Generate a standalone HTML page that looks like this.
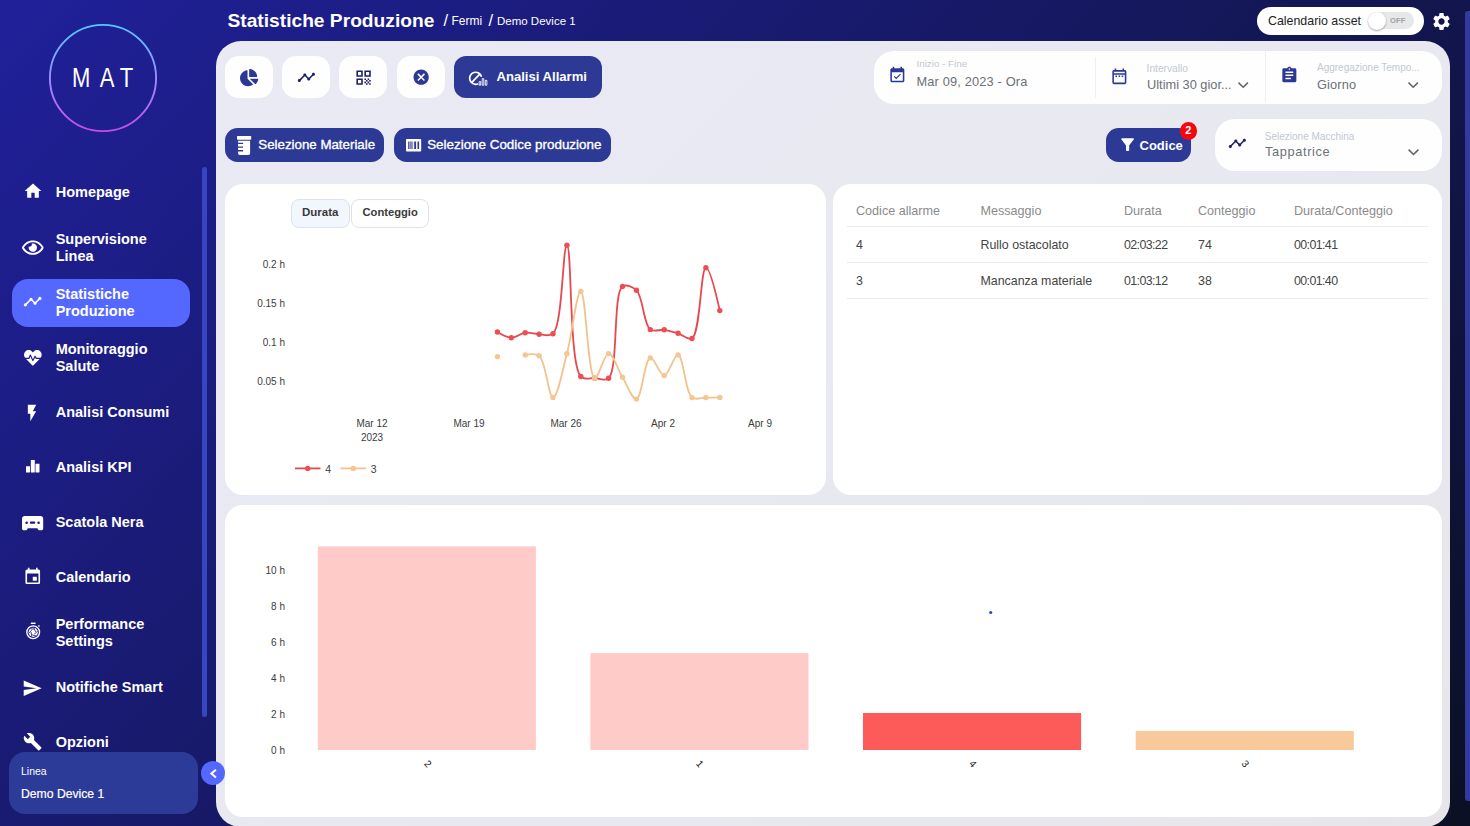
<!DOCTYPE html>
<html lang="it">
<head>
<meta charset="utf-8">
<title>Statistiche Produzione</title>
<style>
*{box-sizing:border-box;margin:0;padding:0}
html,body{width:1470px;height:826px;overflow:hidden}
body{font-family:"Liberation Sans",sans-serif;position:relative;background:linear-gradient(133deg,#20209a 0%,#0b1024 100%);color:#fff}
.abs{position:absolute}
.t{position:absolute;white-space:nowrap;line-height:1}
svg{display:block;position:absolute;overflow:visible}
/* sidebar */
.nav{position:absolute;left:55.7px;font-weight:bold;font-size:14.5px;line-height:17px;color:#fff;white-space:nowrap}
.active{position:absolute;left:12px;top:278.5px;width:178px;height:48px;border-radius:16px;background:#5468ff}
.sbar{position:absolute;left:202px;top:167px;width:5px;height:550px;border-radius:2.5px;background:#3645c0}
.line{position:absolute;left:9px;top:752.4px;width:188.5px;height:61.5px;border-radius:16px;background:#2c3a98}
.collapse{position:absolute;left:200.7px;top:760.7px;width:24px;height:24px;border-radius:12px;background:#5468ff}
/* main */
.main{position:absolute;left:216px;top:41px;width:1234px;height:786px;border-radius:25px;background:linear-gradient(135deg,#eaeaf5 0%,#e8e8f0 60%,#e6e6ea 100%)}
.vscroll{position:absolute;left:1465.400px;top:10.500px;width:8px;height:790.500px;border-radius:3px;background:#2f3b9e}
.wbtn{position:absolute;top:56px;width:48px;height:42px;border-radius:14px;background:#fefefe}
.bbtn{position:absolute;background:#2c3a95;color:#fff;border-radius:12.5px}
.card{position:absolute;background:#fff;border-radius:18px}
.lbl{position:absolute;white-space:nowrap;line-height:1;font-size:9.5px;color:#c3c8d3}
.val{position:absolute;white-space:nowrap;line-height:1;font-size:13.2px;color:#6c7077}
.th{position:absolute;white-space:nowrap;line-height:1;font-size:12.6px;color:#8b8b8b;top:205px}
.td{position:absolute;white-space:nowrap;line-height:1;font-size:12.4px;color:#444}
.hr{position:absolute;left:847px;width:581px;height:1px;background:#e9ebf2}
.ax{position:absolute;white-space:nowrap;line-height:1;font-size:11px;color:#444}
</style>
</head>
<body>

<!-- ============ SIDEBAR ============ -->
<div id="sidebar">
  <svg style="left:49px;top:24px" width="108" height="108" viewBox="0 0 108 108">
    <defs><linearGradient id="lg" x1="0" y1="0" x2="0" y2="1"><stop offset="0" stop-color="#55c8ff"/><stop offset="0.5" stop-color="#9d8cff"/><stop offset="1" stop-color="#c54be6"/></linearGradient></defs>
    <circle cx="54" cy="54" r="53.1" fill="none" stroke="url(#lg)" stroke-width="1.9"/>
  </svg>
  <svg id="mat" style="left:60px;top:60px" width="90" height="36" viewBox="60 60 90 36"><text transform="scale(.8,1)" x="90 124.750 149.600" y="87.500" font-family="Liberation Sans, sans-serif" font-size="27.500" fill="#fff">MAT</text></svg>

  <div class="active"></div>
  <div class="sbar"></div>

  <div class="nav" style="top:184px">Homepage</div>
  <div class="nav" style="top:231px">Supervisione<br>Linea</div>
  <div class="nav" style="top:286px">Statistiche<br>Produzione</div>
  <div class="nav" style="top:341px">Monitoraggio<br>Salute</div>
  <div class="nav" style="top:404.4px">Analisi Consumi</div>
  <div class="nav" style="top:459.4px">Analisi KPI</div>
  <div class="nav" style="top:514.4px">Scatola Nera</div>
  <div class="nav" style="top:569.4px">Calendario</div>
  <div class="nav" style="top:616px">Performance<br>Settings</div>
  <div class="nav" style="top:679.4px">Notifiche Smart</div>
  <div class="nav" style="top:734.4px">Opzioni</div>

  <div class="line"></div>
  <div class="t" style="left:21px;top:766px;font-size:10.5px;color:#fff">Linea</div>
  <div class="t" style="left:21px;top:788.2px;font-size:12.2px;color:#fff;-webkit-text-stroke:.2px #fff">Demo Device 1</div>
</div>

<!-- ============ HEADER ============ -->
<div class="t" id="title" style="left:227.5px;top:10.8px;font-size:19.2px;font-weight:bold">Statistiche Produzione</div>
<div class="t" id="bc1s" style="left:443.6px;top:12px;font-size:16.5px">/</div><div class="t" id="bc1" style="left:451.4px;top:15.3px;font-size:12px">Fermi</div>
<div class="t" id="bc2s" style="left:488.6px;top:12px;font-size:16.5px">/</div><div class="t" id="bc2" style="left:497px;top:15.5px;font-size:11.5px">Demo Device 1</div>

<div class="abs" style="left:1257px;top:6.7px;width:167px;height:28px;border-radius:14px;background:#fff"></div>
<div class="t" id="calasset" style="left:1268px;top:15px;font-size:12.4px;color:#222">Calendario asset</div>
<div class="abs" style="left:1368px;top:12px;width:46px;height:17px;border-radius:9px;background:#e6e8ea"></div>
<div class="abs" style="left:1368px;top:11.5px;width:18px;height:18px;border-radius:9px;background:#fff;box-shadow:0 1px 2px rgba(0,0,0,.35)"></div>
<div class="t" style="left:1390px;top:17px;font-size:7.7px;color:#a3a3a3;font-weight:bold">OFF</div>

<!-- ============ MAIN PANEL ============ -->
<div class="main"></div>
<div class="vscroll"></div>
<div class="collapse"></div>

<div class="wbtn" style="left:225px"></div>
<div class="wbtn" style="left:282px"></div>
<div class="wbtn" style="left:339px"></div>
<div class="wbtn" style="left:396.5px"></div>
<div class="bbtn" style="left:454px;top:56px;width:148px;height:42px;border-radius:12px"></div>
<div class="t" id="aa" style="left:496.5px;top:69.8px;font-size:13.1px;font-weight:bold">Analisi Allarmi</div>

<div class="bbtn" style="left:225px;top:128px;width:159px;height:34px"></div>
<div class="t" id="sm" style="left:258.3px;top:138px;font-size:13.3px;-webkit-text-stroke:.35px #fff">Selezione Materiale</div>
<div class="bbtn" style="left:394px;top:128px;width:217px;height:34px"></div>
<div class="t" id="scp" style="left:427.2px;top:138px;font-size:13.4px;-webkit-text-stroke:.35px #fff">Selezione Codice produzione</div>

<!-- date panel -->
<div class="card" style="left:874px;top:51px;width:568px;height:53px;border-radius:20px;background:#fefefe"></div>
<div class="abs" style="left:1095px;top:57px;width:1px;height:41px;background:#efeff3"></div>
<div class="abs" style="left:1265px;top:52px;width:1px;height:51px;background:#efeff3"></div>
<div class="lbl" style="left:916.5px;top:59px;font-size:9.8px">Inizio - Fine</div>
<div class="val" id="v1" style="left:916.5px;top:76px;font-size:12.8px;letter-spacing:.16px">Mar 09, 2023 - Ora</div>
<div class="lbl" style="left:1146.600px;top:63.500px;font-size:10.2px">Intervallo</div>
<div class="val" id="v2" style="left:1147px;top:78.5px;font-size:12.8px">Ultimi 30 gior...</div>
<div class="lbl" style="left:1317px;top:63px;font-size:10px">Aggregazione Tempo...</div>
<div class="val" id="v3" style="left:1317px;top:78.5px;font-size:12.8px;letter-spacing:.13px">Giorno</div>

<!-- codice + machine -->
<div class="bbtn" style="left:1106px;top:128px;width:85px;height:34px"></div>
<div class="t" id="cod" style="left:1139.5px;top:138.5px;font-size:13px;font-weight:bold">Codice</div>
<div class="abs" style="left:1179.600px;top:122px;width:17.5px;height:17.5px;border-radius:9px;background:#f8060e"></div>
<div class="t" style="left:1185.200px;top:125.400px;font-size:11px;font-weight:bold">2</div>
<div class="card" style="left:1215px;top:119px;width:227px;height:52px;border-radius:20px;background:#fefefe"></div>
<div class="lbl" style="left:1264.800px;top:131.600px;font-size:10px">Selezione Macchina</div>
<div class="val" id="v4" style="left:1265px;top:146px;font-size:12.8px;letter-spacing:.63px">Tappatrice</div>

<!-- ============ CARDS ============ -->
<div class="card" style="left:225px;top:183.7px;width:601px;height:311px"></div>
<div class="card" style="left:832.8px;top:183.7px;width:609px;height:311px"></div>
<div class="card" style="left:225px;top:504.7px;width:1216.8px;height:312.6px"></div>

<!-- tabs -->
<div class="abs" style="left:291px;top:199px;width:59px;height:28.5px;border-radius:8px;border:1px solid #dde2ee;background:#f2f7fd"></div>
<div class="abs" style="left:351px;top:199px;width:77.5px;height:28.5px;border-radius:8px;border:1px solid #dde2ee;background:#fff"></div>
<div class="t" id="tab1" style="left:302px;top:206.6px;font-size:11.5px;font-weight:bold;color:#3a3a3a">Durata</div>
<div class="t" id="tab2" style="left:362.5px;top:206.700px;font-size:11.2px;font-weight:bold;color:#3a3a3a">Conteggio</div>

<!-- line chart -->
<svg id="linechart" style="left:225px;top:184px" width="601" height="310" viewBox="225 184 601 310">
<path d="M497.40,332.00Q506.65,337.60 511.30,337.70C515.91,337.80 520.50,333.26 525.20,332.70C529.77,332.15 534.46,334.03 539.10,334.20C543.73,334.37 549.16,337.10 553.00,333.70C562.74,325.06 562.64,245.19 566.90,245.30C572.08,245.43 568.93,364.44 580.80,376.50C584.67,380.43 590.06,377.92 594.70,378.20C599.32,378.48 604.76,381.50 608.60,378.20C618.52,369.67 612.75,292.89 622.50,286.50C626.34,283.98 632.47,286.57 636.40,290.20C643.09,296.38 643.51,324.72 650.30,329.60C654.22,332.41 659.60,329.20 664.20,329.80C668.87,330.41 673.51,331.87 678.10,333.30C682.77,334.76 688.16,340.65 692.00,338.50C700.47,333.77 700.58,268.02 705.90,267.70Q710.10,267.45 719.80,310.60" fill="none" stroke="#e5494f" stroke-width="1.800"/>
<g fill="#ee4d52"><circle cx="497.4" cy="332.0" r="2.700"/><circle cx="511.3" cy="337.7" r="2.700"/><circle cx="525.2" cy="332.7" r="2.700"/><circle cx="539.1" cy="334.2" r="2.700"/><circle cx="553.0" cy="333.7" r="2.700"/><circle cx="566.9" cy="245.3" r="2.700"/><circle cx="580.8" cy="376.5" r="2.700"/><circle cx="594.7" cy="378.2" r="2.700"/><circle cx="608.6" cy="378.2" r="2.700"/><circle cx="622.5" cy="286.5" r="2.700"/><circle cx="636.4" cy="290.2" r="2.700"/><circle cx="650.3" cy="329.6" r="2.700"/><circle cx="664.2" cy="329.8" r="2.700"/><circle cx="678.1" cy="333.3" r="2.700"/><circle cx="692.0" cy="338.5" r="2.700"/><circle cx="705.9" cy="267.7" r="2.700"/><circle cx="719.8" cy="310.6" r="2.700"/></g>
<path d="M525.20,354.90Q535.20,352.79 539.10,355.80C546.03,361.14 548.41,397.43 553.00,397.40C557.68,397.37 562.59,369.73 566.90,353.80C571.99,334.98 576.48,291.37 580.80,291.50C585.87,291.65 587.81,376.96 594.70,378.20C598.61,378.90 603.93,353.64 608.60,353.60C613.20,353.56 617.79,369.61 622.50,377.30C627.07,384.76 632.23,399.61 636.40,399.10C641.81,398.44 644.62,358.88 650.30,357.90C654.39,357.20 659.68,375.77 664.20,375.60C668.96,375.42 673.97,354.33 678.10,354.90C683.64,355.67 684.99,392.51 692.00,397.60C695.90,400.43 701.27,397.63 705.90,397.60Q710.53,397.57 719.80,397.40" fill="none" stroke="#f3c28e" stroke-width="1.800"/>
<g fill="#f5c592"><circle cx="497.4" cy="356.6" r="2.700"/><circle cx="525.2" cy="354.9" r="2.700"/><circle cx="539.1" cy="355.8" r="2.700"/><circle cx="553.0" cy="397.4" r="2.700"/><circle cx="566.9" cy="353.8" r="2.700"/><circle cx="580.8" cy="291.5" r="2.700"/><circle cx="594.7" cy="378.2" r="2.700"/><circle cx="608.6" cy="353.6" r="2.700"/><circle cx="622.5" cy="377.3" r="2.700"/><circle cx="636.4" cy="399.1" r="2.700"/><circle cx="650.3" cy="357.9" r="2.700"/><circle cx="664.2" cy="375.6" r="2.700"/><circle cx="678.1" cy="354.9" r="2.700"/><circle cx="692.0" cy="397.6" r="2.700"/><circle cx="705.9" cy="397.6" r="2.700"/><circle cx="719.8" cy="397.4" r="2.700"/></g>
<path d="M295,468.4H320.5" stroke="#e5494f" stroke-width="1.800"/><circle cx="307.7" cy="468.4" r="2.700" fill="#ee4d52"/>
<path d="M340.5,468.4H366" stroke="#f3c28e" stroke-width="1.800"/><circle cx="353.2" cy="468.4" r="2.700" fill="#f5c592"/>
<g font-family="Liberation Sans, sans-serif" font-size="10" fill="#3c3c3c">
<text x="285" y="267.6" text-anchor="end">0.2 h</text>
<text x="285" y="306.6" text-anchor="end">0.15 h</text>
<text x="285" y="345.6" text-anchor="end">0.1 h</text>
<text x="285" y="384.6" text-anchor="end">0.05 h</text>
<text x="372" y="427" text-anchor="middle">Mar 12</text>
<text x="469" y="427" text-anchor="middle">Mar 19</text>
<text x="566" y="427" text-anchor="middle">Mar 26</text>
<text x="663" y="427" text-anchor="middle">Apr 2</text>
<text x="760" y="427" text-anchor="middle">Apr 9</text>
<text x="372" y="441" text-anchor="middle">2023</text>
<text x="325.3" y="472.6" font-size="10.5">4</text><text x="370.8" y="472.6" font-size="10.5">3</text>
</g></svg>
<!-- bar chart -->
<svg id="barchart" style="left:225px;top:505px" width="1217" height="312" viewBox="225 505 1217 312">
<rect x="317.8" y="546.4" width="218.1" height="203.6" fill="#ffcbc8"/>
<rect x="590.4" y="653.1" width="218.1" height="96.9" fill="#ffcbc8"/>
<rect x="863" y="713" width="218.1" height="37" fill="#fd5a5a"/>
<rect x="1135.7" y="731" width="218.1" height="19" fill="#f8c99b"/>
<circle cx="990.7" cy="612.5" r="1.6" fill="#1f4fc4"/>
<g font-family="Liberation Sans, sans-serif" font-size="10" fill="#3c3c3c">
<text x="285" y="573.6" text-anchor="end">10 h</text>
<text x="285" y="609.6" text-anchor="end">8 h</text>
<text x="285" y="645.6" text-anchor="end">6 h</text>
<text x="285" y="681.6" text-anchor="end">4 h</text>
<text x="285" y="717.6" text-anchor="end">2 h</text>
<text x="285" y="753.6" text-anchor="end">0 h</text>
<text transform="translate(427.5,764) rotate(48)" font-size="10" text-anchor="middle" y="3" fill="#222">2</text>
<text transform="translate(699.5,764) rotate(48)" font-size="10" text-anchor="middle" y="3" fill="#222">1</text>
<text transform="translate(972.5,764) rotate(48)" font-size="10" text-anchor="middle" y="3" fill="#222">4</text>
<text transform="translate(1245,764) rotate(48)" font-size="10" text-anchor="middle" y="3" fill="#222">3</text>
</g></svg>

<!-- table -->
<div class="th" style="left:856px">Codice allarme</div>
<div class="th" style="left:980.5px">Messaggio</div>
<div class="th" style="left:1124px">Durata</div>
<div class="th" style="left:1198px">Conteggio</div>
<div class="th" style="left:1294px">Durata/Conteggio</div>
<div class="hr" style="top:226px"></div>
<div class="hr" style="top:262px"></div>
<div class="hr" style="top:298px"></div>
<div class="td" style="left:856px;top:239px">4</div>
<div class="td" style="left:980.5px;top:239px">Rullo ostacolato</div>
<div class="td" style="left:1124px;top:239px;letter-spacing:-0.6px">02:03:22</div>
<div class="td" style="left:1198px;top:239px">74</div>
<div class="td" style="left:1294px;top:239px;letter-spacing:-0.6px">00:01:41</div>
<div class="td" style="left:856px;top:275px">3</div>
<div class="td" style="left:980.5px;top:275px">Mancanza materiale</div>
<div class="td" style="left:1124px;top:275px;letter-spacing:-0.6px">01:03:12</div>
<div class="td" style="left:1198px;top:275px">38</div>
<div class="td" style="left:1294px;top:275px;letter-spacing:-0.6px">00:01:40</div>

<!-- ============ ICONS ============ -->
<svg style="left:22.70px;top:180.80px" width="20" height="20" viewBox="0 0 24 24" fill="#fff" ><path d="M10 20v-6h4v6h5v-8h3L12 3 2 12h3v8z"/></svg>
<svg style="left:21.95px;top:238.00px" width="21.6" height="19.2" viewBox="0 0 576 512" fill="#fff"><path d="M288 144a110.940 110.940 0 0 0-31.240 5 55.400 55.400 0 0 1 7.240 27 56 56 0 0 1-56 56 55.400 55.400 0 0 1-27-7.240A111.710 111.710 0 1 0 288 144zm284.520 97.400C518.290 135.590 410.930 64 288 64S57.680 135.640 3.480 241.410a32.350 32.350 0 0 0 0 29.190C57.710 376.410 165.070 448 288 448s230.320-71.640 284.520-177.410a32.350 32.350 0 0 0 0-29.190zM288 400c-98.650 0-189.090-55-237.930-144C98.910 167 189.340 112 288 112s189.090 55 237.930 144C477.100 345 386.660 400 288 400z"/></svg>
<svg style="left:22.85px;top:291.75px" width="19.3" height="19.3" viewBox="0 0 24 24" fill="#fff" ><path d="M23 8c0 1.1-.9 2-2 2-.18 0-.35-.02-.51-.07l-3.56 3.55c.05.16.07.34.07.52 0 1.1-.9 2-2 2s-2-.9-2-2c0-.18.02-.36.07-.52l-2.55-2.55c-.16.05-.34.07-.52.07s-.36-.02-.52-.07l-4.55 4.56c.05.16.07.33.07.51 0 1.1-.9 2-2 2s-2-.9-2-2 .9-2 2-2c.18 0 .35.02.51.07l4.56-4.55C8.02 9.36 8 9.18 8 9c0-1.1.9-2 2-2s2 .9 2 2c0 .18-.02.36-.07.52l2.55 2.55c.16-.05.34-.07.52-.07s.36.02.52.07l3.55-3.56C19.02 8.35 19 8.18 19 8c0-1.1.9-2 2-2s2 .9 2 2z"/></svg>
<svg style="left:23.65px;top:349.45px" width="17.7" height="17.7" viewBox="0 0 512 512" fill="#fff" ><path d="M320.2 243.8l-49.7 99.4c-6 12.1-23.4 11.7-28.9-.6l-56.9-126.3-30 71.7H60.6l182.5 186.5c7.1 7.3 18.6 7.3 25.7 0L451.4 288H342.3l-22.1-44.2zM473.7 73.9l-2.4-2.5c-51.5-52.6-135.8-52.6-187.4 0L256 100l-27.9-28.5c-51.5-52.7-135.9-52.7-187.4 0l-2.4 2.4C-10.4 123.7-12.5 203 31 256h102.4l35.9-86.2c5.4-12.9 23.6-13.2 29.4-.4l58.2 129.3 49-97.9c5.9-11.8 22.7-11.8 28.6 0l27.6 55.2H481c43.5-53 41.4-132.3-7.3-182.1z"/></svg>
<svg style="left:22.10px;top:403.00px" width="20" height="20" viewBox="0 0 24 24" fill="#fff" ><path d="M7 2v11h3v9l7-12h-4l4-8z"/></svg>
<svg style="left:25.9px;top:460.2px" width="13.5" height="12.4" viewBox="0 0 13.5 12.4"><path fill="#fff" d="M.4 6.300h3.200c.2 0 .4.200.4.400v5.300c0 .2-.2.400-.4.400H.4c-.2 0-.4-.2-.4-.4V6.700c0-.2.200-.4.400-.4zM5.200 0h3.200c.2 0 .4.200.4.400V12c0 .2-.2.400-.4.400H5.200c-.2 0-.4-.2-.4-.4V.4c0-.2.200-.4.400-.4zM9.900 3.700h3.200c.2 0 .4.200.4.400V12c0 .2-.2.400-.4.400H9.900c-.2 0-.4-.2-.4-.4V4.100c0-.2.200-.4.400-.4z"/></svg>
<svg style="left:21.9px;top:515.9px" width="21.2" height="14.3" viewBox="0 0 21.2 14.3"><path fill="#fff" fill-rule="evenodd" d="M2.6 0h16c1.4 0 2.6 1.100 2.600 2.600v9.800c0 1.100-.9 1.900-1.900 1.900h-2.100c-.5 0-1-.3-1.200-.8l-.6-1.300H5.800l-.6 1.300c-.2.500-.7.800-1.200.8H1.900c-1 0-1.900-.8-1.900-1.900V2.600C0 1.100 1.200 0 2.600 0zM4.600 5.400a1.300 1.300 0 1 0 0 2.600 1.300 1.300 0 0 0 0-2.600zM16.600 5.400a1.300 1.300 0 1 0 0 2.600 1.300 1.300 0 0 0 0-2.600zM9 5.600h3.200c.6 0 1.100.5 1.100 1.100s-.5 1.100-1.100 1.100H9c-.6 0-1.100-.5-1.100-1.100S8.400 5.600 9 5.600z"/></svg>
<svg style="left:23.05px;top:567.40px" width="19.5" height="19.5" viewBox="0 0 24 24" fill="#fff" ><path d="M17 12h-5v5h5v-5zM16 1v2H8V1H6v2H5c-1.11 0-1.99.9-1.99 2L3 19c0 1.1.89 2 2 2h14c1.1 0 2-.9 2-2V5c0-1.1-.9-2-2-2h-1V1h-2zm3 18H5V8h14v11z"/></svg>
<svg style="left:24.600px;top:622px" width="16.400" height="18.200" viewBox="0 0 18 20"><circle cx="9" cy="11.3" r="7" fill="none" stroke="#fff" stroke-width="1.500"/><circle cx="9" cy="11.3" r="5.100" fill="#fff"/><path d="M6.400 .6h5.200v1.600H6.400z" fill="#fff"/><path d="M14.200 4.500l1.200-1.200 1.100 1.100-1.200 1.200z" fill="#fff"/><g stroke="#1d1d84" stroke-width=".9" fill="none"><path d="M9.600 6.300l2.100 4.700M13.900 10.200l-3.700 3M12.500 15.200l-4.800-1M7.400 16.100l-.7-5.100M4.100 12.300l3.700-3.800M5.500 7.400l5 .4"/></g></svg>
<svg style="left:22.15px;top:677.95px" width="20.5" height="20.5" viewBox="0 0 24 24" fill="#fff" ><path d="M2.01 21L23 12 2.01 3 2 10l15 2-15 2z"/></svg>
<svg style="left:22.75px;top:731.85px" width="19.3" height="19.3" viewBox="0 0 24 24" fill="#fff" ><path d="M22.7 19l-9.1-9.1c.9-2.3.4-5-1.5-6.9-2-2-5-2.4-7.4-1.3L9 6 6 9 1.6 4.7C.4 7.1.9 10.1 2.9 12.1c1.9 1.9 4.6 2.4 6.9 1.5l9.1 9.1c.4.4 1 .4 1.4 0l2.3-2.3c.5-.4.5-1.1.1-1.4z"/></svg>
<svg style="left:1431.00px;top:11.30px" width="21" height="21" viewBox="0 0 24 24" fill="#fff" ><path d="M19.14 12.94c.04-.3.06-.61.06-.94 0-.32-.02-.64-.07-.94l2.03-1.58c.18-.14.23-.41.12-.61l-1.92-3.32c-.12-.22-.37-.29-.59-.22l-2.39.96c-.5-.38-1.03-.7-1.62-.94l-.36-2.54c-.04-.24-.24-.41-.48-.41h-3.84c-.24 0-.43.17-.47.41l-.36 2.54c-.59.24-1.13.57-1.62.94l-2.39-.96c-.22-.08-.47 0-.59.22L2.74 8.87c-.12.21-.08.47.12.61l2.03 1.58c-.05.3-.09.63-.09.94s.02.64.07.94l-2.03 1.58c-.18.14-.23.41-.12.61l1.92 3.32c.12.22.37.29.59.22l2.39-.96c.5.38 1.03.7 1.62.94l.36 2.54c.05.24.24.41.48.41h3.84c.24 0 .44-.17.47-.41l.36-2.54c.59-.24 1.13-.56 1.62-.94l2.39.96c.22.08.47 0 .59-.22l1.92-3.32c.12-.22.07-.47-.12-.61l-2.01-1.58zM12 15.6c-1.98 0-3.6-1.62-3.6-3.6s1.62-3.6 3.6-3.6 3.6 1.62 3.6 3.6-1.62 3.6-3.6 3.6z"/></svg>
<svg style="left:208px;top:767px" width="10" height="13" viewBox="208 767 10 13"><path d="M215.900 769.700L211.400 773.600L215.900 777.500" fill="none" stroke="#fff" stroke-width="2"/></svg>
<svg style="left:239.85px;top:68.80px" width="18.3" height="17.2" viewBox="0 0 544 512" fill="#2c3994" ><path d="M527.79 288H290.5l158.03 158.03c6.04 6.04 15.98 6.53 22.19.68 38.7-36.46 65.32-85.61 73.13-140.86 1.34-9.46-6.51-17.85-16.06-17.85zm-15.83-64.8C503.72 103.74 408.26 8.28 288.8.04 279.68-.59 272 7.1 272 16.24V240h223.77c9.14 0 16.82-7.68 16.19-16.8zM224 288V50.71c0-9.550-8.39-17.4-17.84-16.06C86.99 51.49-4.1 155.6.14 280.37 4.5 408.51 114.83 513.59 243.03 511.98c50.4-.63 96.97-16.87 135.26-44.03 7.9-5.6 8.42-17.23 1.57-24.08L224 288z"/></svg>
<svg style="left:297.20px;top:68.00px" width="18.8" height="18.8" viewBox="0 0 24 24" fill="#1c2163" ><path d="M23 8c0 1.1-.9 2-2 2-.18 0-.35-.02-.51-.07l-3.56 3.55c.05.16.07.34.07.52 0 1.1-.9 2-2 2s-2-.9-2-2c0-.18.02-.36.07-.52l-2.55-2.55c-.16.05-.34.07-.52.07s-.36-.02-.52-.07l-4.55 4.56c.05.16.07.33.07.51 0 1.1-.9 2-2 2s-2-.9-2-2 .9-2 2-2c.18 0 .35.02.51.07l4.56-4.55C8.02 9.36 8 9.18 8 9c0-1.1.9-2 2-2s2 .9 2 2c0 .18-.02.36-.07.52l2.55 2.55c.16-.05.34-.07.52-.07s.36.02.52.07l3.55-3.56C19.02 8.35 19 8.18 19 8c0-1.1.9-2 2-2s2 .9 2 2z"/></svg>
<svg style="left:354.20px;top:67.60px" width="19.2" height="19.2" viewBox="0 0 24 24" fill="#1c2163" ><path d="M3 11h8V3H3v8zm2-6h4v4H5V5zM3 21h8v-8H3v8zm2-6h4v4H5v-4zM13 3v8h8V3h-8zm6 6h-4V5h4v4zM19 19h2v2h-2zM13 13h2v2h-2zM15 15h2v2h-2zM13 17h2v2h-2zM15 19h2v2h-2zM17 17h2v2h-2zM17 13h2v2h-2zM19 15h2v2h-2z"/></svg>
<svg style="left:411.95px;top:68.05px" width="18.3" height="18.3" viewBox="0 0 24 24" fill="#2c3994" ><path d="M12 2C6.47 2 2 6.47 2 12s4.47 10 10 10 10-4.47 10-10S17.530 2 12 2zm5 13.59L15.59 17 12 13.41 8.410 17 7 15.59 10.59 12 7 8.410 8.410 7 12 10.59 15.59 7 17 8.410 13.41 12 17 15.59z"/></svg>
<svg style="left:468.5px;top:70.5px" width="19" height="15" viewBox="0 0 19 15"><g fill="none" stroke="#fff" stroke-width="1.700"><path d="M9.200 12.700a6 6 0 1 1 3.300-6.800"/><path d="M2.600 11.600L10.800 3.200"/></g><g fill="none" stroke="#fff" stroke-width=".9"><path d="M10.200 10.600h1.500v3.600h-1.500zM13.200 7.700h1.600v6.500h-1.600zM16.300 9.400h1.600v4.800h-1.600z"/></g></svg>
<svg style="left:237px;top:135.900px" width="14.2" height="19" viewBox="0 0 14.2 19"><path fill="#fff" d="M.5 0h13.200c.3 0 .5.200.5.500v2.800c0 .3-.2.500-.5.500H.5c-.3 0-.5-.2-.5-.5V.5C0 .2.200 0 .5 0zM1.100 4.800h12v12.500c0 1-.8 1.700-1.700 1.700H2.800c-1 0-1.700-.8-1.700-1.700v-1.800h4.600c.2 0 .4-.2.400-.4v-.6c0-.2-.2-.4-.4-.4H1.100v-2.300h4.600c.2 0 .4-.2.400-.4v-.6c0-.2-.2-.4-.4-.4H1.100V8.100h4.600c.2 0 .4-.2.400-.4v-.6c0-.2-.2-.4-.4-.4H1.100z"/></svg>
<svg style="left:405.800px;top:139px" width="15.200" height="12.500" viewBox="0 0 15.200 12.500"><path fill="#fff" fill-rule="evenodd" d="M.8 0h13.600c.4 0 .8.400.8.800v10.900c0 .4-.4.800-.8.800H.8c-.4 0-.8-.4-.8-.8V.8C0 .4.400 0 .8 0zM2.200 2.500v7.500h1.300V2.500zM4.100 2.500v7.500h.6V2.500zM5.300 2.500v7.500h.6V2.500zM6.500 2.500v7.500h.6V2.500zM8.200 2.500v7.500h1.900V2.500zM11.500 2.500v7.500h1.600V2.500z"/></svg>
<svg style="left:1117.9px;top:134.9px" width="19.2" height="19.2" viewBox="0 0 24 24" fill="#fff" ><path d="M4.25 5.61C6.27 8.2 10 13 10 13v6c0 .55.45 1 1 1h2c.55 0 1-.45 1-1v-6s3.72-4.8 5.74-7.39c.51-.66.04-1.61-.79-1.61H5.04c-.83 0-1.3.95-.79 1.61z"/></svg>
<svg style="left:887.95px;top:65.65px" width="18.7" height="18.7" viewBox="0 0 24 24" fill="#2c3994" ><path d="M16.53 11.06L15.47 10l-4.88 4.88-2.12-2.12-1.06 1.06L10.59 17l5.94-5.940zM19 3h-1V1h-2v2H8V1H6v2H5c-1.110 0-1.99.9-1.990 2L3 19c0 1.1.89 2 2 2h14c1.1 0 2-.9 2-2V5c0-1.1-.9-2-2-2zm0 16H5V8h14v11z"/></svg>
<svg style="left:1109.65px;top:66.55px" width="18.7" height="18.7" viewBox="0 0 24 24" fill="#2c3994" ><path d="M7 11h2v2H7v-2zm14-5v14c0 1.1-.9 2-2 2H5c-1.110 0-2-.9-2-2l.01-14c0-1.1.880-2 1.990-2h1V2h2v2h8V2h2v2h1c1.1 0 2 .9 2 2zM5 8h14V6H5v2zm14 12V10H5v10h14zm-4-7h2v-2h-2v2zm-4 0h2v-2h-2v2z"/></svg>
<svg style="left:1279.65px;top:65.85px" width="18.7" height="18.7" viewBox="0 0 24 24" fill="#2c3994" ><path d="M19 3h-4.180C14.4 1.840 13.3 1 12 1c-1.3 0-2.4.840-2.820 2H5c-1.1 0-2 .9-2 2v14c0 1.1.9 2 2 2h14c1.1 0 2-.9 2-2V5c0-1.1-.9-2-2-2zm-7 0c.55 0 1 .45 1 1s-.45 1-1 1-1-.45-1-1 .45-1 1-1zm2 14H7v-2h7v2zm3-4H7v-2h10v2zm0-4H7V7h10v2z"/></svg>
<svg style="left:1227.65px;top:134.45px" width="18.7" height="18.7" viewBox="0 0 24 24" fill="#1c2163" ><path d="M23 8c0 1.1-.9 2-2 2-.18 0-.35-.02-.51-.07l-3.56 3.55c.05.16.07.34.07.52 0 1.1-.9 2-2 2s-2-.9-2-2c0-.18.02-.36.07-.52l-2.55-2.55c-.16.05-.34.07-.52.07s-.36-.02-.52-.07l-4.55 4.56c.05.16.07.33.07.51 0 1.1-.9 2-2 2s-2-.9-2-2 .9-2 2-2c.18 0 .35.02.51.07l4.56-4.55C8.02 9.36 8 9.18 8 9c0-1.1.9-2 2-2s2 .9 2 2c0 .18-.02.36-.07.52l2.55 2.55c.16-.05.34-.07.52-.07s.36.02.52.07l3.55-3.56C19.02 8.35 19 8.18 19 8c0-1.1.9-2 2-2s2 .9 2 2z"/></svg>
<svg style="left:1237.6px;top:82.3px" width="10.4" height="6" viewBox="0 0 10.4 6"><path d="M0.500 0.600L5.200 5.200L9.900 0.600" fill="none" stroke="#5f636a" stroke-width="1.500"/></svg>
<svg style="left:1407.5px;top:82.3px" width="10.4" height="6" viewBox="0 0 10.4 6"><path d="M0.500 0.600L5.200 5.200L9.900 0.600" fill="none" stroke="#5f636a" stroke-width="1.500"/></svg>
<svg style="left:1407.8px;top:149.2px" width="11" height="6.300" viewBox="0 0 10.4 6"><path d="M0.500 0.600L5.200 5.200L9.900 0.600" fill="none" stroke="#5f636a" stroke-width="1.500"/></svg>
</body>
</html>
